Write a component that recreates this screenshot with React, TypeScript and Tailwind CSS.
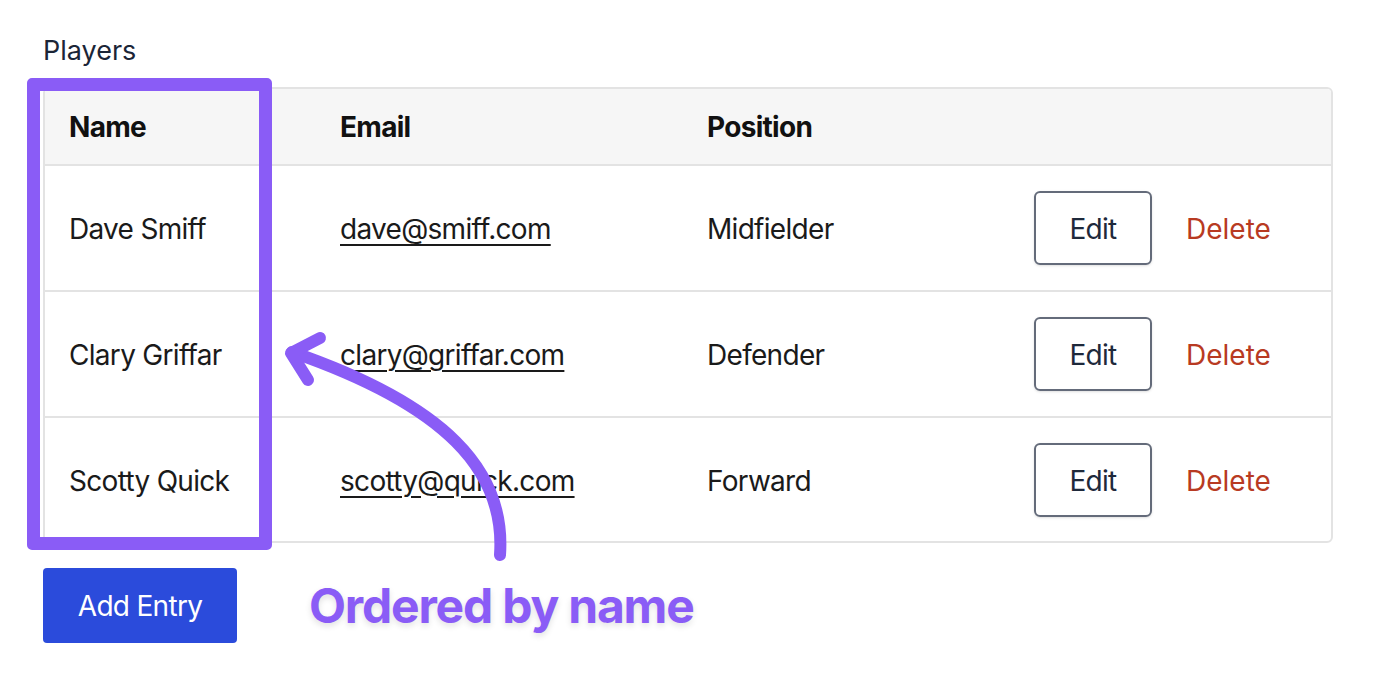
// ── Players table with annotation ─────────────────────────────────────────
import React from 'react';

interface Player {
    name: string;
    email: string;
    position: string;
}

const players: Player[] = [
    { name: 'Dave Smiff', email: 'dave@smiff.com', position: 'Midfielder' },
    { name: 'Clary Griffar', email: 'clary@griffar.com', position: 'Defender' },
    { name: 'Scotty Quick', email: 'scotty@quick.com', position: 'Forward' },
];

const font = { fontFamily: 'Inter, "Noto Sans", sans-serif' };

export default function App() {
    return (
        <div className="relative w-[1380px] h-[684px] bg-white pl-[43px] pt-[34px]" style={font}>
            <h2 className="text-[27px] leading-[34px] text-[#1b2537] tracking-normal">Players</h2>

            <div className="mt-[19px] w-[1290px] border-2 border-[#e3e3e3] rounded-[6px] overflow-hidden">
                <table className="w-full border-collapse text-[28px] tracking-tight">
                    <thead>
                        <tr className="h-[76px] bg-[#f6f6f6] border-b-2 border-[#e3e3e3] text-left text-[#111]">
                            <th className="w-[270px] pl-[24px] font-bold">Name</th>
                            <th className="w-[367px] pl-[25px] font-bold">Email</th>
                            <th className="w-[326px] pl-[25px] font-bold">Position</th>
                            <th />
                        </tr>
                    </thead>
                    <tbody>
                        {players.map((p, i) => (
                            <tr key={p.email} className={i < players.length - 1 ? 'h-[126px] border-b-2 border-[#e3e3e3]' : 'h-[124px]'}>
                                <td className="pl-[24px] pt-[2px] text-[#1a1a1a]">{p.name}</td>
                                <td className="pl-[25px] pt-[2px]">
                                    <a href="#" className="text-[#1a1a1a] underline decoration-2 underline-offset-[5px]">{p.email}</a>
                                </td>
                                <td className="pl-[25px] pt-[2px] text-[#1a1a1a]">{p.position}</td>
                                <td className="pl-[26px]">
                                    <div className="flex items-center gap-[34px]">
                                        <button className="w-[118px] h-[74px] pt-[2px] border-2 border-[#646b7a] rounded-[6px] text-[#1e293b] shadow-sm">Edit</button>
                                        <button className="pt-[2px] text-[#b83a22] tracking-normal">Delete</button>
                                    </div>
                                </td>
                            </tr>
                        ))}
                    </tbody>
                </table>
            </div>

            <div className="mt-[25px] flex items-center gap-[72px]">
                <button className="w-[194px] h-[75px] bg-[#2b4bdb] rounded-[4px] text-white text-[28px] tracking-tight">Add Entry</button>
                <span className="text-[48px] leading-[60px] font-bold text-[#8a5cf6] tracking-tight [text-shadow:0_3px_6px_rgba(0,0,0,0.12)]">Ordered by name</span>
            </div>

            {/* highlight box round the name column */}
            <div className="absolute left-[27px] top-[78px] w-[245px] h-[472px] border-[13px] border-[#8a5cf6] rounded-[5px] pointer-events-none" />

            {/* curved arrow */}
            <svg className="absolute left-0 top-0 pointer-events-none" width="1380" height="684" fill="none">
                <path d="M500 555 C 506 470 445 405 292 352" stroke="#8a5cf6" strokeWidth="12" strokeLinecap="round" />
                <path d="M320 338 L291 353 L308 380" stroke="#8a5cf6" strokeWidth="12" strokeLinecap="round" strokeLinejoin="round" />
            </svg>
        </div>
    );
}
